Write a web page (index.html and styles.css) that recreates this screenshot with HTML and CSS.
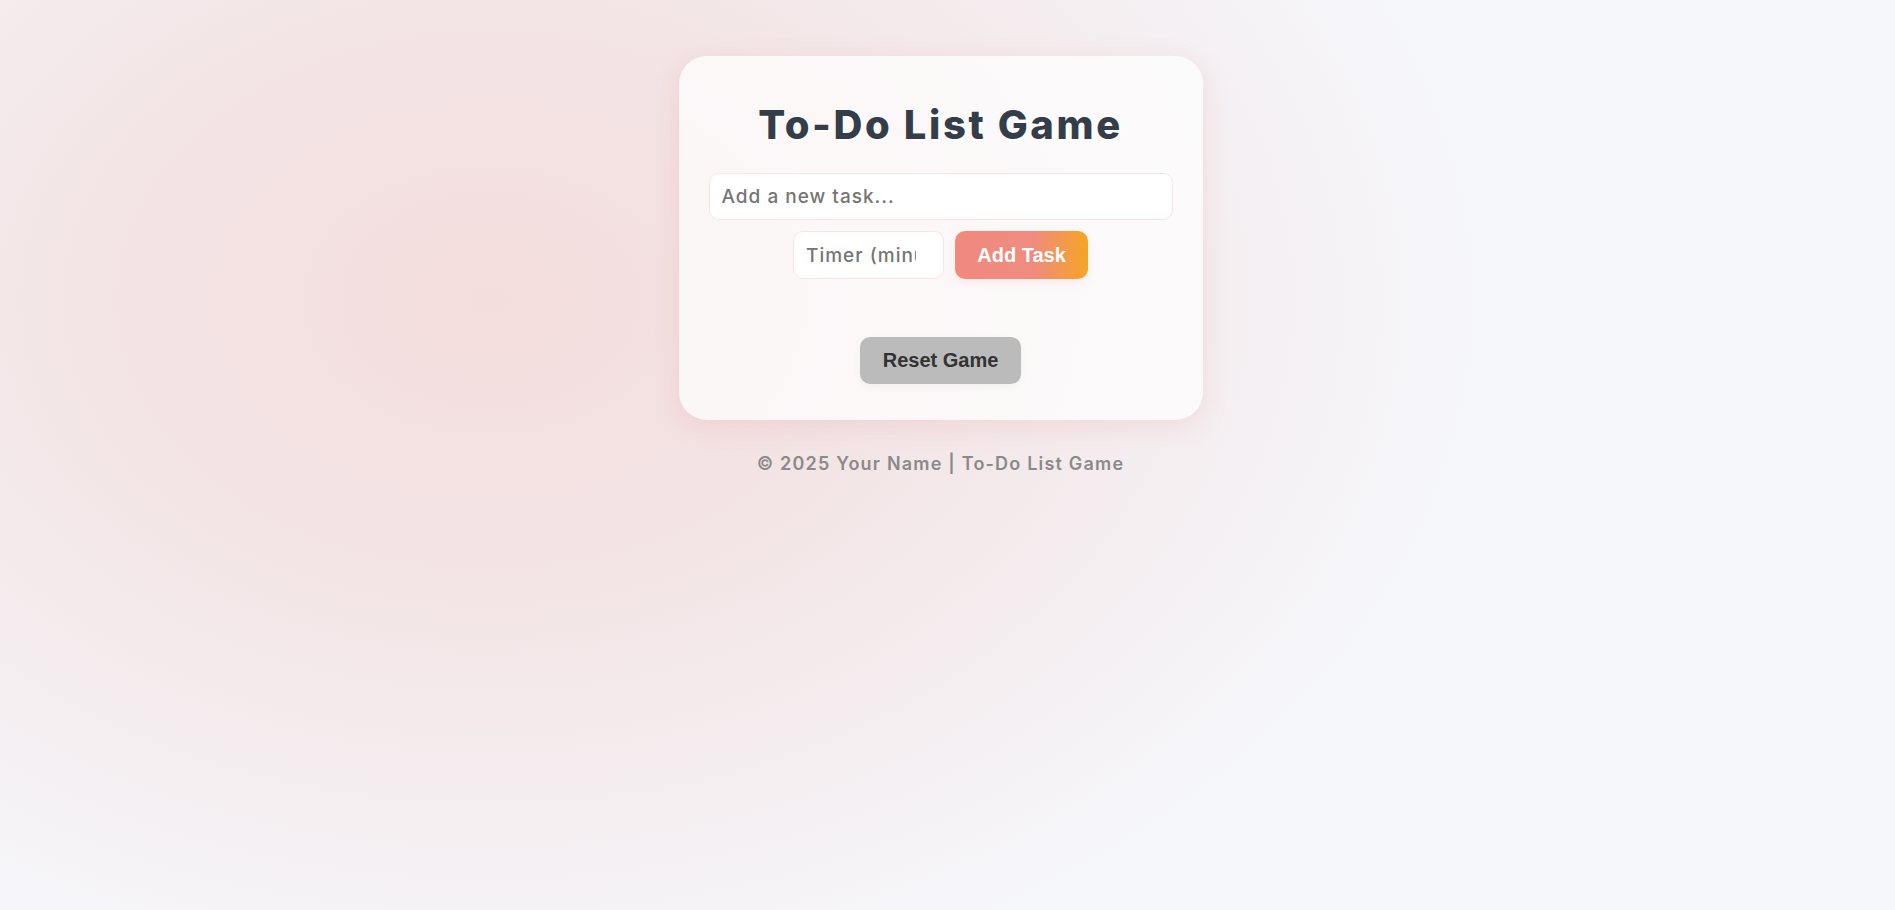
FILE: index.html
```html
<!DOCTYPE html>
<html lang="en">
<head>
<meta charset="UTF-8">
<title>To-Do List Game</title>
<link rel="stylesheet" href="styles.css">
</head>
<body>
  <main class="page">
    <section class="card">
      <h1 class="title">To-Do List Game</h1>
      <input class="task-input" type="text" placeholder="Add a new task...">
      <div class="add-row">
        <input class="timer-input" type="number" placeholder="Timer (minutes)">
        <button class="add-btn">Add Task</button>
      </div>
      <ul class="task-list"></ul>
      <button class="reset-btn">Reset Game</button>
    </section>
    <footer class="footer">© 2025 Your Name | To-Do List Game</footer>
  </main>
</body>
</html>
```

FILE: styles.css
```css
* { box-sizing: border-box; }

html, body {
  margin: 0;
  height: 100%;
}

body {
  font-family: "Inter", "Open Sans", sans-serif;
  background:
    radial-gradient(ellipse 1000px 720px at 490px 300px,
      #f4dddd 0%, #f3e3e4 35%, #f4ecee 65%, rgba(246,247,251,0) 100%),
    #f6f7fb;
  background-attachment: fixed;
}

.page {
  display: flex;
  flex-direction: column;
  align-items: center;
  padding-top: 56px;
  padding-right: 14px;
}

.card {
  width: 524px;
  padding: 45px 30px 36px;
  background: rgba(255, 255, 255, 0.72);
  border-radius: 28px;
  box-shadow: 0 6px 24px rgba(232, 150, 150, 0.22);
  display: flex;
  flex-direction: column;
  align-items: center;
}

.title {
  margin: 0 0 24px;
  font-size: 40px;
  line-height: 48px;
  font-weight: 800;
  letter-spacing: 2.6px;
  color: #343d4a;
  text-shadow: 2px 2px 2px #ffffff;
}

.task-input,
.timer-input {
  font-family: "Inter", "Open Sans", sans-serif;
  font-size: 19px;
  font-weight: 500;
  letter-spacing: 1px;
  color: #333;
  background: #ffffff;
  border: 1px solid #fbe3e3;
  border-radius: 10px;
  outline: none;
}

.task-input::placeholder,
.timer-input::placeholder {
  color: #757575;
}

.task-input {
  width: 100%;
  height: 47px;
  padding: 0 12px;
}

.add-row {
  display: flex;
  gap: 11px;
  margin-top: 11px;
}

.timer-input {
  width: 151px;
  height: 48px;
  padding: 0 12px;
}

.add-btn,
.reset-btn {
  font-family: "Liberation Sans", Arial, sans-serif;
  font-size: 20px;
  font-weight: 700;
  border: none;
  border-radius: 10px;
  cursor: pointer;
}

.add-btn {
  width: 133px;
  height: 48px;
  color: #ffffff;
  background: linear-gradient(90deg, #f08a7e 0%, #f08b7f 58%, #f5a524 100%);
  box-shadow: 0 3px 10px rgba(240, 138, 126, 0.15);
}

.task-list {
  list-style: none;
  margin: 0;
  padding: 0;
  height: 58px;
}

.reset-btn {
  width: 161px;
  height: 47px;
  color: #333333;
  background: #bbbbbb;
  box-shadow: 0 3px 10px rgba(0, 0, 0, 0.04);
}

.footer {
  margin-top: 32px;
  font-size: 18px;
  font-weight: 600;
  letter-spacing: 1.2px;
  line-height: 24px;
  color: #8a8a8a;
}
```
